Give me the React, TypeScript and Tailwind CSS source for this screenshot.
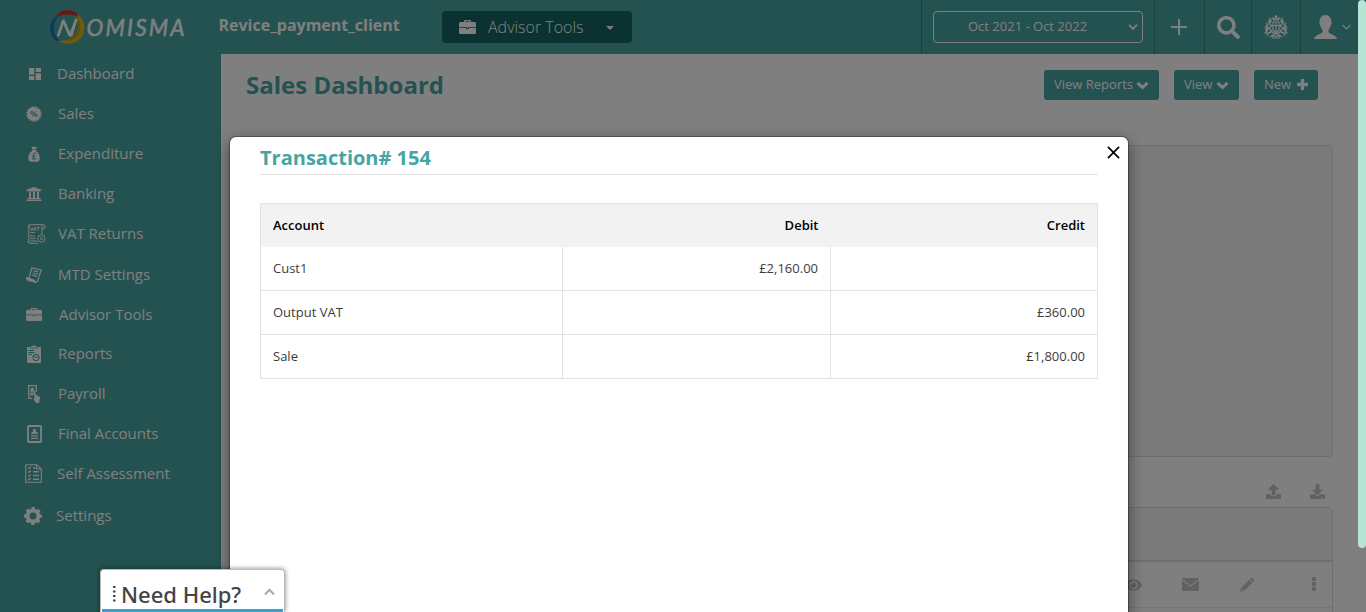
import React from 'react';
import { MdDashboard } from 'react-icons/md';
import { FaUniversity, FaUpload, FaDownload, FaEye, FaSearch } from 'react-icons/fa';

const Briefcase = ({ className }: { className: string }) => (
  <svg viewBox="0 0 17 14" preserveAspectRatio="none" className={className} fill="currentColor">
    <path d="M5 2V1.200Q5 0 6.200 0h4.600Q12 0 12 1.200V2h3.500Q17 2 17 3.500V7H0V3.500Q0 2 1.500 2zm1.400 0h4.200v-.8H6.400z" />
    <path d="M0 7.700h7q0 1.500 1.500 1.500T10 7.700h7v5.100q0 1.200-1.200 1.200H1.200Q0 14 0 12.800z" />
    <path d="M7.800 6.800h1.400v1.400H7.800z" />
  </svg>
);

const Badge = () => (
  <svg viewBox="0 0 16 16" className="h-4 w-4">
    <circle cx="8" cy="8" r="6.700" fill="currentColor" />
    <circle cx="8" cy="8" r="7" fill="none" stroke="currentColor" strokeWidth="1.500" strokeDasharray="1.700 1.050" />
    <g fill="none" stroke="#46a4a2" strokeWidth="1">
      <circle cx="5.900" cy="6.800" r="1.200" />
      <circle cx="10.100" cy="9.200" r="1.200" />
      <path d="M9.800 5.300 6.200 10.700" />
    </g>
  </svg>
);

const MoneyBag = () => (
  <svg viewBox="0 0 12 16" className="h-4 w-3">
    <path fill="currentColor" d="M3.600.6 5 1.200 6 .3l1.200.9L9 .7 8 3.400H4.300zM4 4.100h4.200v.8Q11.500 7.300 11.700 11.500 12 15.700 8.700 15.700H3.300Q0 15.700.3 11.500.6 7.300 4 4.900z" />
    <path fill="none" stroke="#46a4a2" strokeWidth="1" d="M8.300 8.200Q7.800 7 6.500 7.100 5 7.300 5.400 9.400q.5 2.500-.9 3.600h4M4 10.200h3.300" />
  </svg>
);

const VatDoc = () => (
  <svg viewBox="0 0 19 20" className="h-5 w-[19px]" fill="none" stroke="currentColor" strokeWidth="1">
    <path d="M11 19.300H2.500Q.8 19.300.8 17.500h1V2.500Q1.800.7 3.500.7H16q2 0 2 2v1.500h-3V10M15 4V2.500Q15 1 16 .8M3 .8Q.8.800.8 3h1M3 12h5.500M3 14.500h5.500M3 17h7" />
    <path d="m3.500 3.500 1.200 3 1.200-3M6.500 6.500l1.300-3 1.200 3M7 5.500h1.600M9.500 3.500h3M11 3.500v3M3.500 8.500H8" />
    <circle cx="14.500" cy="14.500" r="3.700" />
    <path d="m13 13 3 3M16 13l-3 3" />
  </svg>
);

const Scroll = () => (
  <svg viewBox="0 0 16 16" className="h-4 w-4" fill="none" stroke="currentColor" strokeWidth="1.200">
    <path d="m6 .8 9.200 2.100-3.500 10.800q-.6 1.700-2.300 1.300L7.500 13 2.700 11.600z" />
    <path fill="currentColor" d="m.7 10.900 7 2.100 1.500 2L3 13.600Q.5 12.800.7 10.900z" />
    <path d="m7.500 3.700 5 1.200M6.800 6l5 1.200M6.100 8.200l5 1.200" />
  </svg>
);

const Report = () => (
  <svg viewBox="0 0 14 18" className="h-[18px] w-3.5">
    <path fill="currentColor" d="M0 2h3.500v1.400h7V2H14v16H0zM4 1.200h2L6.400 0h1.200L8 1.200h2v1.600H4z" />
    <g fill="none" stroke="#46a4a2" strokeWidth="1">
      <path d="M1.500 5.500H7M1.500 7.500h6M1.500 9.500h3" />
      <circle cx="9" cy="12.500" r="3.200" />
      <path d="m7 11 2 1.500 2.500-.5" />
    </g>
  </svg>
);

const Payroll = () => (
  <svg viewBox="0 0 12 18" className="h-[18px] w-3">
    <path fill="none" stroke="currentColor" strokeWidth="1.300" d="M4 13.300H.7V.7h7.600V7" />
    <path fill="currentColor" d="M4.300 2.500Q6 2.500 6 4.300 6 5.500 7 6.800H2Q2.800 5.500 2.700 4.300q0-1.800 1.600-1.800zM2.300 7.500h3v3h-3zM5.500 6.800Q6.300 6 7 7l1.300 3.300 2.800 1q1 .6.800 2l-.8 4.700H7.700L6 14.500q-1.200-2 .8-1.200z" />
  </svg>
);

const Accounts = () => (
  <svg viewBox="0 0 15 18" className="h-[18px] w-[15px]">
    <rect x="1" y="1" width="13" height="16" rx=".8" fill="none" stroke="currentColor" strokeWidth="1.800" />
    <path fill="currentColor" d="M6.200 4h2.600v2.600Q11 7 11 9H4q0-2 2.200-2.400zM4 10.200h7v1.300H4zM4 12.700h7V14H4z" />
  </svg>
);

const Checklist = () => (
  <svg viewBox="0 0 17 19" className="h-[19px] w-[17px]" fill="none" stroke="currentColor" strokeWidth="1.100">
    <path d="M.7.700h11L16.300 5v13.300H.7zM11.500.7V5h4.800" />
    <path d="m3 3.700 1 1 2-2M3 7.500l1 1 2-2M3 11.300l1 1 2-2M3 15l1 1 2-2" />
    <path strokeWidth="1.500" d="M8 4h2.500M8 7.800h6M8 11.500h6M8 15.300h6" />
  </svg>
);

const Gear = () => (
  <svg viewBox="0 0 18 18" className="h-[18px] w-[18px]" fill="none" stroke="currentColor">
    <circle cx="9" cy="9" r="5.400" strokeWidth="3.800" />
    <circle cx="9" cy="9" r="7.800" strokeWidth="2.200" strokeDasharray="3.450 2.676" strokeDashoffset="1.725" />
  </svg>
);

const Chevron = () => (
  <svg viewBox="0 0 13 9" className="h-[9px] w-[13px]">
    <path d="m1.500 1.800 5 4.700 5-4.700" fill="none" stroke="currentColor" strokeWidth="3" />
  </svg>
);

const Logo = () => (
  <svg viewBox="0 0 137 36" className="h-9 w-[137px]">
    <path d="M7 8.500Q10 1 18.500 1T31 8.500Q25 5 18.500 5.500 12 5 7 8.500" fill="#d62a30" />
    <path d="M10 5.500Q0 12 1 20q1 13 15 14.500Q5 30 5 20 4 13 10 5.500" fill="#1872b8" />
    <path d="M28 4.500Q35.500 11 35.300 19 34 34 19 34.800 13 35 9 31.500q8 1 15-3.500 8-7 4-23.500" fill="#e2b512" />
    <path d="M25 7.500Q31 11 30.500 19 29 29 19 31.500" fill="none" stroke="#ad9a28" strokeWidth="1.500" />
    <path d="M8.300 27 13.500 11h1.700l5.800 13.500L26.500 10h1.700L23 27h-3L14.500 14 10 27z" fill="#fff" stroke="#fff" strokeWidth="1" />
    <text x="37.500" y="26.800" fill="#fff" stroke="#fff" strokeWidth=".5" fontFamily="Lato" fontStyle="italic" fontWeight="400" fontSize="22.500" textLength="98">OMISMA</text>
  </svg>
);

const Crest = () => (
  <svg viewBox="0 0 24 24" className="h-6 w-6" fill="none" stroke="currentColor" strokeWidth="1.200">
    <path d="M12 0v4M10.500 1.500h3M9.500 5l-.7-2 2 .8L12 2.500l1.200 1.300 2-.8-.7 2zM9 7h6v8l-3 3-3-3zM9 10.500h6M12 7v10M8 17q4 4 8 0M6 22l3-2 3 1.500 3-1.500 3 2M9 20v3h6v-3" />
    <path d="m5 3 2 1v3L5 8l3 3-3 2 3 3-4 2-1 3M4 5l2 1-2 2M2 8l2 2-2 1 3 2-3 1v3M1 12l3 3-3 3h5l2-2M19 3l-2 1v3l2 1-3 3 3 2-3 3 4 2 1 3M20 5l-2 1 2 2M22 8l-2 2 2 1-3 2 3 1v3M23 12l-3 3 3 3h-5l-2-2" />
  </svg>
);

const menu = [
  { label: 'Dashboard', icon: <MdDashboard className="h-4 w-4" />, cls: 'pl-[27px]', text: 'pl-[29px]' },
  { label: 'Sales', icon: <Badge />, cls: 'pl-[26px]', text: 'pl-[31px]' },
  { label: 'Expenditure', icon: <MoneyBag />, cls: 'pl-[26px]', text: 'pl-[31px]' },
  { label: 'Banking', icon: <FaUniversity className="h-4 w-4" />, cls: 'pl-[26px]', text: 'pl-[31px]' },
  { label: 'VAT Returns', icon: <VatDoc />, cls: 'pl-[28px]', text: 'pl-[29px]' },
  { label: 'MTD Settings', icon: <Scroll />, cls: 'mt-px pl-[26px]', text: 'pl-[31px]' },
  { label: 'Advisor Tools', icon: <Briefcase className="h-[13px] w-4" />, cls: 'pl-[26px]', text: 'pl-[32px]' },
  { label: 'Reports', icon: <Report />, cls: '-mt-px pl-[26px]', text: 'pl-[31px]' },
  { label: 'Payroll', icon: <Payroll />, cls: 'pl-[26px]', text: 'pl-[31px]' },
  { label: 'Final Accounts', icon: <Accounts />, cls: 'pl-[26px]', text: 'pl-[31px]' },
  { label: 'Self Assessment', icon: <Checklist />, cls: 'pl-[25px]', text: 'pl-[31px]' },
  { label: 'Settings', icon: <Gear />, cls: 'mt-0.5 pl-[25px]', text: 'pl-[30px]' },
];

const rows = [
  { cells: ['Cust1', '£2,160.00', ''], cls: '' },
  { cells: ['Output VAT', '', '£360.00'], cls: 'pb-0.5' },
  { cells: ['Sale', '', '£1,800.00'], cls: 'pb-0.5' },
];

function Header() {
  return (
    <header className="flex h-[54px] shrink-0 bg-[#46a4a2] pr-2 text-white">
      <div className="w-[218.500px] shrink-0 pt-[9px] pl-[49px]"><Logo /></div>
      <div className="w-[223.500px] shrink-0 pt-[13px] text-base leading-6 font-bold">Revice_payment_client</div>
      <div className="mt-[11px] flex h-8 w-[190px] items-center rounded bg-[#126460] pl-[17px] text-base font-light">
        <Briefcase className="-mt-px h-3.5 w-[17px]" />
        <span className="w-[130px] pl-3">Advisor Tools</span>
        <svg viewBox="0 0 8 4" className="mt-0.5 h-1 w-2 shrink-0"><path d="M0 0h8L4 4z" fill="currentColor" /></svg>
      </div>
      <div className="ml-auto flex">
        <div className="w-[233px] border-l border-[#33817f] pt-[11px] pl-[11px]">
          <div className="flex h-8 w-[210px] items-center rounded border border-white pl-[34px] text-[13px]">
            <span className="w-[160px]">Oct 2021 - Oct 2022</span>
            <svg viewBox="0 0 10 6" className="h-1.5 w-2.5"><path d="m1 .8 4 4 4-4" fill="none" stroke="currentColor" strokeWidth="1.900" /></svg>
          </div>
        </div>
        <div className="flex w-[50px] items-center justify-center border-l border-[#33817f] pr-0.5">
          <svg viewBox="0 0 16 16" className="h-4 w-4"><path d="M8 0v16M0 8h16" stroke="currentColor" strokeWidth="2" /></svg>
        </div>
        <div className="flex w-[47px] items-center justify-center border-l border-[#33817f] pt-px"><FaSearch className="h-[23px] w-[23px]" /></div>
        <div className="flex w-[49px] items-center justify-center border-l border-[#33817f]"><Crest /></div>
        <div className="flex w-[58px] items-center border-l border-[#33817f] pl-[13px]">
          <svg viewBox="0 0 23 24" className="h-6 w-[23px]" fill="currentColor"><path d="M11.500 0Q17 0 17.300 6.500q.7.400.2 2.500-.3 1.300-.8 1.500-.6 2.800-2.200 4.300v2q0 1 2 1.900 4.500 1.800 5.300 3Q23 22.800 23 24H0q0-1.200 1.200-2.300.8-1.200 5.300-3 2-.9 2-1.900v-2Q6.900 13.300 6.300 10.500 5.800 10.300 5.500 9 5 6.900 5.700 6.500 6 0 11.500 0z" /></svg>
          <svg viewBox="0 0 9 6" className="ml-[5px] h-1.5 w-[9px]"><path d="m.5.800 4 4 4-4" fill="none" stroke="currentColor" strokeWidth="1.200" /></svg>
        </div>
      </div>
    </header>
  );
}

function Dashboard() {
  const button = 'flex h-[30px] items-center justify-between rounded-[3px] bg-[#46a4a2] px-[10px] text-[13px] text-white';
  return (
    <main className="flex flex-1 flex-col bg-white pr-[33px] pl-[25px]">
      <div className="flex items-start justify-between pt-4 pr-[15px]">
        <h1 className="-mt-px text-2xl leading-[31px] font-bold text-[#46a4a2]">Sales Dashboard</h1>
        <div className="flex gap-[15px]">
          <div className={button + ' w-[115px]'}>View Reports<Chevron /></div>
          <div className={button + ' w-[65px]'}>View<Chevron /></div>
          <div className={button + ' w-[64px]'}>New
            <svg viewBox="0 0 11 11" className="-mt-0.5 h-[11px] w-[11px]"><path d="M5.500 0v11M0 5.500h11" stroke="currentColor" strokeWidth="3.400" /></svg>
          </div>
        </div>
      </div>
      <div className="mt-[45px] h-[312px] shrink-0 rounded-sm border border-[#dcdcdc] bg-[#f5f5f5]" />
      <div className="flex h-[50px] shrink-0 justify-end gap-[29px] pt-[27px] pr-2 text-[#c5c1c1]">
        <FaUpload className="h-[15px] w-[15px]" /><FaDownload className="h-[15px] w-[15px]" />
      </div>
      <div className="h-[120px] shrink-0 rounded border border-[#dcdcdc]">
        <div className="h-[54px] border-b-2 border-[#dcdcdc] bg-[#f5f5f5]" />
        <div className="flex h-[46px] items-center justify-end border-b border-[#eaeaea] text-[#c5c1c1]">
          <FaEye className="h-4 w-[17px]" />
          <svg viewBox="0 0 17 13" className="ml-10 h-[13px] w-[17px]" fill="currentColor"><path d="M0 .5Q0 0 .5 0h16q.5 0 .5.500V1L8.500 7.500 0 1zM0 2.300l8.500 6.500L17 2.300V12q0 1-1 1H1q-1 0-1-1z" /></svg>
          <svg viewBox="0 0 14 14" className="ml-[41px] h-3.5 w-3.5" fill="currentColor"><path d="m10 1 1-.8q.8-.5 1.500.2l1.200 1.300q.6.800 0 1.500l-.9.900zM9.300 1.700l3 3L4.500 12.500.3 13.800q-.4 0-.3-.4l1.400-3.900zM1.800 11.700l.7.700 1-.3-1.300-1.400z" fillRule="evenodd" /></svg>
          <svg viewBox="0 0 4 14" className="mr-4 mb-0.5 ml-[58px] h-3.5 w-1" fill="currentColor"><path d="M0 0h4v3.700H0zM0 5h4v3.700H0zM0 10h4v3.700H0z" /></svg>
        </div>
      </div>
    </main>
  );
}

function Transaction() {
  return (
    <section className="relative ml-[230px] h-[560px] w-[898px] rounded-md bg-white px-[30px] pt-[7px] shadow-[0_0_0_1px_rgba(0,0,0,0.3),0_5px_15px_rgba(0,0,0,0.5)]">
      <h2 className="h-[31px] border-b border-[#e2e2e2] text-xl leading-[28px] font-bold text-[#46a4a2]">Transaction# 154</h2>
      <svg viewBox="0 0 14 14" className="absolute top-[9px] right-2 h-[13px] w-[13px]"><path d="m1 1 12 12M13 1 1 13" stroke="#000" strokeWidth="1.800" /></svg>
      <table className="mt-7 w-full table-fixed border-collapse border border-[#e2e2e2] text-[13px] leading-5 text-[#3c3c3c]">
        <colgroup><col className="w-[302px]" /><col className="w-[268px]" /><col /></colgroup>
        <thead>
          <tr className="h-[43px] bg-[#f2f2f2] text-black">
            <th className="px-3 text-left font-semibold">Account</th>
            <th className="px-3 text-right font-semibold">Debit</th>
            <th className="px-3 text-right font-semibold">Credit</th>
          </tr>
        </thead>
        <tbody>
          {rows.map(({ cells, cls }) => (
            <tr key={cells[0]} className="h-11 border-b border-[#e2e2e2]">
              <td className={'border-r border-[#e2e2e2] px-3 ' + cls}>{cells[0]}</td>
              <td className={'border-r border-[#e2e2e2] px-3 text-right ' + cls}>{cells[1]}</td>
              <td className={'px-3 text-right ' + cls}>{cells[2]}</td>
            </tr>
          ))}
        </tbody>
      </table>
    </section>
  );
}

export default function App() {
  return (
    <div className="relative h-[612px] w-[1366px] overflow-hidden font-['Open_Sans',sans-serif]">
      <div className="flex h-full flex-col">
        <Header />
        <div className="flex min-h-0 flex-1">
          <nav className="-mt-px w-[221px] shrink-0 bg-[#46a4a2] text-[15px] text-white">
            {menu.map((m) => (
              <div key={m.label} className={'flex h-10 items-center ' + m.cls}>
                <span className="-mx-[9px] flex w-[34px] shrink-0 justify-center pt-px">{m.icon}</span>
                <span className={'-ml-[15px] leading-5 ' + m.text}>{m.label}</span>
              </div>
            ))}
          </nav>
          <Dashboard />
        </div>
      </div>
      <div className="absolute inset-0 bg-black/50 pt-[137px]"><Transaction /></div>
      <div className="absolute top-0 right-0 h-[548px] w-2 rounded bg-[#b8e4d6]" />
      <div className="absolute bottom-0 left-[100px] flex h-[43px] w-[185px] items-center rounded-t border border-b-0 border-[#bbb] bg-white px-px shadow-[0_0_5px_rgba(0,0,0,0.5)]">
        <div className="flex h-full w-full items-center border-b-[3px] border-[#3a9fd9] pt-2 pl-[11px] text-[#444]">
          <svg viewBox="0 0 3 16" className="h-4 w-[3px]" fill="currentColor"><path d="M0 0h2.500v2H0zM0 4.500h2.500v2H0zM0 9h2.500v2H0zM0 13.500h2.500v2H0z" /></svg>
          <span className="w-[148px] pl-[5px] font-['Noto_Sans',sans-serif] text-[22px] leading-8 font-medium">Need Help?</span>
          <svg viewBox="0 0 11 8" className="mb-1 h-2 w-[11px]"><path d="m1 6.500 4.500-4.700L10 6.500" fill="none" stroke="#aaa" strokeWidth="2.200" /></svg>
        </div>
      </div>
    </div>
  );
}
